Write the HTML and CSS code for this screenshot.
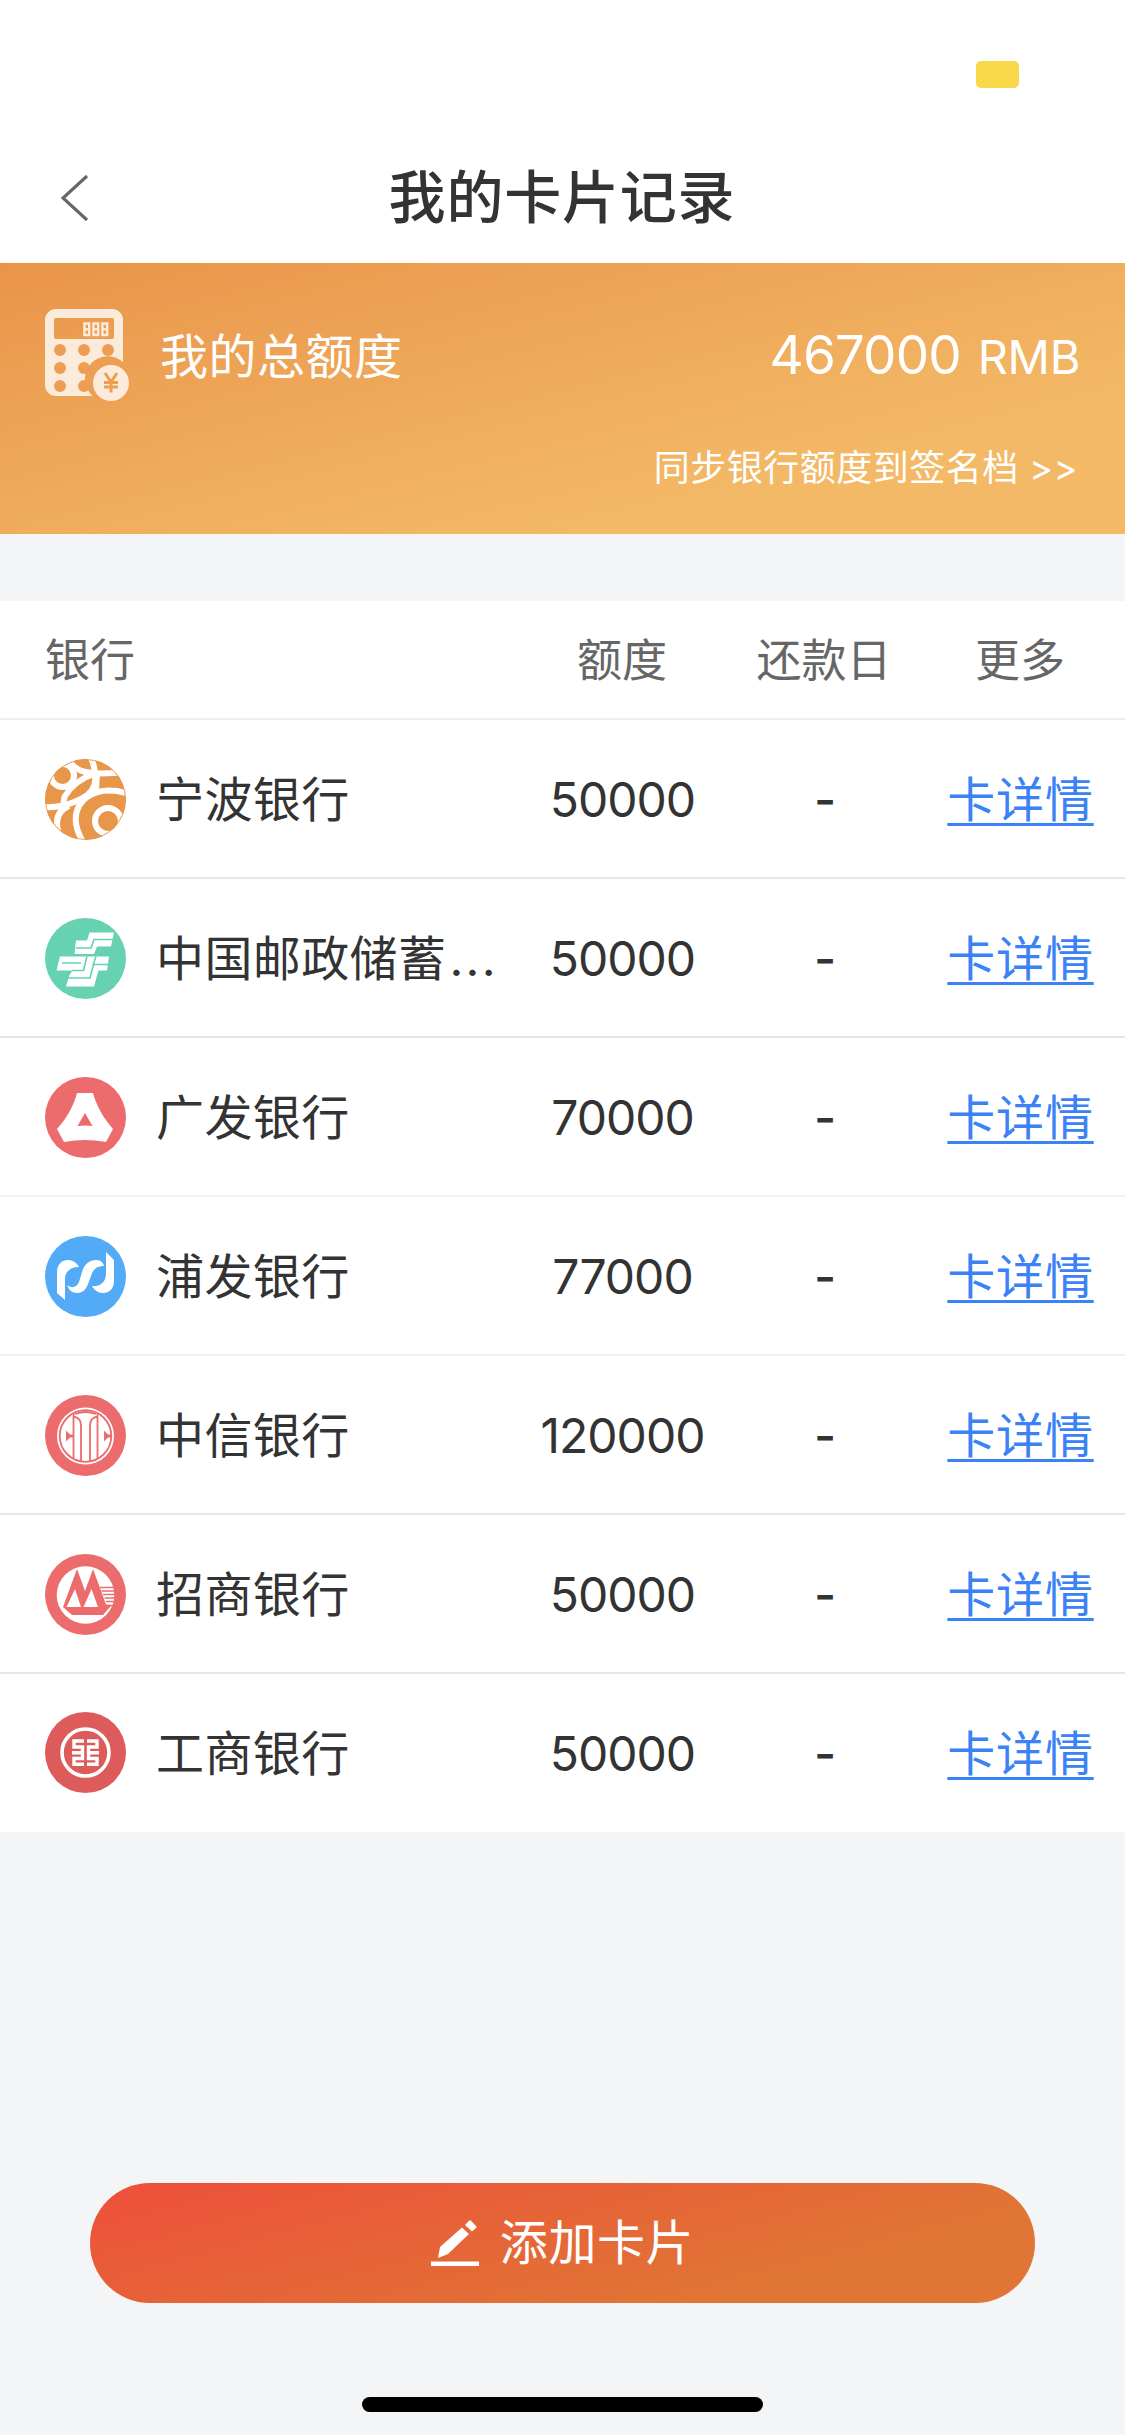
FILE: index.html
```html
<!DOCTYPE html>
<html lang="zh-CN">
<head>
<meta charset="utf-8">
<title>我的卡片记录</title>
<link rel="stylesheet" href="styles.css">
</head>
<body>
<div class="screen">
  <div class="status-bar"><span class="battery"></span></div>
  <header class="nav">
    <svg class="back" viewBox="0 0 28 46"><path d="M26 1 2 23l24 22" fill="none" stroke="#666" stroke-width="3.200"/></svg>
    <h1 class="title">我的卡片记录</h1>
  </header>

  <section class="summary">
    <div class="summary-main">
      <svg class="calculator" viewBox="0 0 84 92">
        <path fill="#fbebdb" fill-rule="evenodd" d="M11 0H67a11 11 0 0 1 11 11V53A21 21 0 0 0 47.500 87H11A11 11 0 0 1 0 76V11A11 11 0 0 1 11 0ZM11 9a2 2 0 0 0-2 2V28a2 2 0 0 0 2 2H67a2 2 0 0 0 2-2V11a2 2 0 0 0-2-2Z"/>
        <g fill="#ed9e52"><circle cx="15" cy="41" r="6"/><circle cx="39" cy="41" r="6"/><circle cx="63" cy="41" r="6"/><circle cx="15" cy="59" r="6"/><circle cx="39" cy="59" r="6"/><circle cx="15" cy="77" r="6"/><circle cx="39" cy="77" r="6"/><circle cx="66" cy="74" r="22"/></g>
        <path fill="none" stroke="#fbebdb" stroke-width="2.400" d="M39.400 14.500h4.800v11.500h-4.800zM39.400 20.200h4.800M48.400 14.500h4.800v11.500h-4.800zM48.400 20.200h4.800M57.400 14.500h4.800v11.500h-4.800zM57.400 20.200h4.800"/>
        <circle cx="66" cy="74" r="18" fill="#fbebdb"/>
        <path d="M60 64l6 9 6-9M66 72v11.500M59 73.500h14M59 78h14" fill="none" stroke="#ed9e52" stroke-width="3"/>
      </svg>
      <span class="summary-label">我的总额度</span>
      <span class="summary-value"><b class="total">467000</b><span class="currency">RMB</span></span>
    </div>
    <a class="sync">同步银行额度到签名档 &gt;&gt;</a>
  </section>

  <main class="table">
    <div class="row head"><span class="bank">银行</span><span>额度</span><span>还款日</span><span>更多</span></div>

    <div class="row">
      <div class="bank">
        <svg class="logo" viewBox="0 0 81 81">
          <clipPath id="disc"><circle cx="40.500" cy="40.500" r="40.500"/></clipPath>
          <g clip-path="url(#disc)">
            <rect width="81" height="81" fill="#e8974a"/>
            <g fill="none" stroke="#fff" stroke-width="6">
              <circle cx="17.500" cy="16.500" r="11.500"/>
              <path d="M24 1C30 13 43 17 81 13M46 -1Q50 8 50 15M50 15C52 27 46 35 36 40C26 45 14 49 0 48M49 15Q30 21 20 37Q17 44 21 50M52 15L51 31"/>
              <path d="M81 34C60 28 42 33 34 47C28 58 31 71 38 83M24 47Q7 54 14 75"/>
              <circle cx="63" cy="62" r="13"/>
            </g>
            <circle cx="40.500" cy="40.500" r="40" fill="none" stroke="#e8974a"/>
          </g>
        </svg>
        <span class="name">宁波银行</span>
      </div>
      <span class="amount">50000</span><span class="due">-</span><a class="detail">卡详情</a>
    </div>

    <div class="row">
      <div class="bank">
        <svg class="logo" viewBox="0 0 81 81">
          <circle cx="40.500" cy="40.500" r="40.500" fill="#66d2b2"/>
          <path fill="#fff" d="M44.500 14.500H69L66 28.500H52L49 36H29.500L31 22.500H42ZM15 38.500H64L62 52.500H53.500L49 68.500H21L24 58 27.500 52.500H11.500Z"/>
          <path fill="none" stroke="#66d2b2" stroke-width="1.600" d="M31 30H46L49 21.500H68M17 45H36M42 38.500 38.500 52.500H27M51 38.500 48 47M23 60H45L48.500 46.500H64"/>
        </svg>
        <span class="name">中国邮政储蓄<span class="dots">...</span></span>
      </div>
      <span class="amount">50000</span><span class="due">-</span><a class="detail">卡详情</a>
    </div>

    <div class="row faint">
      <div class="bank">
        <svg class="logo" viewBox="0 0 81 81">
          <circle cx="40.500" cy="40.500" r="40.500" fill="#ec6b6d"/>
          <path fill="#fff" fill-rule="evenodd" d="M32 16H48C51 28 59 42 68 52L61 65Q40 61 19 65L12 52C22 41 29 28 32 16ZM40 36 32.500 49Q40 48 47.500 49Z"/>
        </svg>
        <span class="name">广发银行</span>
      </div>
      <span class="amount">70000</span><span class="due">-</span><a class="detail">卡详情</a>
    </div>

    <div class="row faint">
      <div class="bank">
        <svg class="logo" viewBox="0 0 81 81">
          <circle cx="40.500" cy="40.500" r="40.500" fill="#53abf8"/>
          <path fill="#fff" d="M12 57V37C12 28 17 24 23 24C28 24 32 27 34 31C25 31 20 36 20 43V64ZM22 49C27 53 32 51 34 46L37 36C39 28 45 24 51 24C55 24 58 26 59 30C51 30 48 34 46 40L43 48C41 54 37 57 32 57C27 57 24 54 22 49ZM47 50C55 51 61 46 61 38V16L69 24V45C69 53 64 57 58 57C53 57 49 54 47 50Z"/>
        </svg>
        <span class="name">浦发银行</span>
      </div>
      <span class="amount">77000</span><span class="due">-</span><a class="detail">卡详情</a>
    </div>

    <div class="row">
      <div class="bank">
        <svg class="logo" viewBox="0 0 81 81">
          <circle cx="40.500" cy="40.500" r="40.500" fill="#ec6b6d"/>
          <circle cx="40.500" cy="41" r="28.500" fill="#fff"/>
          <g fill="none" stroke="#ec6b6d" stroke-width="1.800">
            <circle cx="40.500" cy="41" r="25.800"/>
            <path d="M28.500 18.500V64M52.500 18.500V64M28.500 21.500Q36 23 36 30V66M52.500 21.500Q45 23 45 30V66M30 19Q40.500 15 51 19"/>
          </g>
          <path fill="#ec6b6d" d="M21 35.500 25 39.500H28V42.500H25L21 46.500ZM59 35.500 63 39.500H66V42.500H63L59 46.500Z"/>
        </svg>
        <span class="name">中信银行</span>
      </div>
      <span class="amount">120000</span><span class="due">-</span><a class="detail">卡详情</a>
    </div>

    <div class="row">
      <div class="bank">
        <svg class="logo" viewBox="0 0 81 81">
          <circle cx="40.500" cy="40.500" r="40.500" fill="#ec6b6d"/>
          <circle cx="40.500" cy="41" r="28.800" fill="#fff"/>
          <path fill="#ec6b6d" fill-rule="evenodd" d="M32 15 40 37 48 15 61 50.500 69 51 65 53 58 61H27L18 53ZM30 35 21.500 53H36ZM46.500 35 38.500 53H53Z"/>
          <path fill="none" stroke="#ec6b6d" stroke-width="1.300" d="M55 33.500H70M56.500 37H70M58 40.500H70M59.500 44H70M61 47.500H69"/>
        </svg>
        <span class="name">招商银行</span>
      </div>
      <span class="amount">50000</span><span class="due">-</span><a class="detail">卡详情</a>
    </div>

    <div class="row last">
      <div class="bank">
        <svg class="logo" viewBox="0 0 81 81">
          <circle cx="40.500" cy="40.500" r="40.500" fill="#de5b5c"/>
          <circle cx="40.500" cy="40.500" r="23.500" fill="none" stroke="#fff" stroke-width="3.600"/>
          <path fill="none" stroke="#fff" stroke-width="3.400" d="M39 29H29V35H37.500V40.800H27M37.500 40.800V46.500H29V52.300H39M42 29H52V35H43.500V40.800H54M43.500 40.800V46.500H52V52.300H42"/>
        </svg>
        <span class="name">工商银行</span>
      </div>
      <span class="amount">50000</span><span class="due">-</span><a class="detail">卡详情</a>
    </div>
  </main>

  <footer class="footer">
    <button class="add">
      <svg class="pencil" viewBox="0 0 48 46"><path fill="#fff" d="M0 41.500H48V46H0ZM7 38 9 27 31 7.500 38 14 17 34ZM34 5 38 .8Q39-.2 40 .8L45 6Q46 7 45 8L41 11.500Z"/></svg>
      <span>添加卡片</span>
    </button>
    <div class="home-indicator"></div>
  </footer>
</div>
</body>
</html>
```
FILE: styles.css
```css
* { box-sizing: border-box; }
body { margin: 0; background: #f3f5f7; font-family: Inter, "Noto Sans CJK SC", sans-serif; color: #333; }
.screen { width: 1125px; height: 2435px; display: flex; flex-direction: column; overflow: hidden; }

.status-bar { height: 132px; background: #fff; display: flex; justify-content: flex-end; padding: 61px 106px 0 0; }
.battery { width: 43px; height: 27px; border-radius: 5px; background: #f9d849; }
.nav { height: 131px; background: #fff; display: flex; align-items: center; padding: 0 61px; }
.back { width: 28px; height: 46px; }
.title { flex: 1; margin: 0 29px 0 0; text-align: center; font-size: 57px; line-height: 80px; font-weight: 500; letter-spacing: .8px; }

.summary { height: 271px; padding: 46px 45px 0; color: #fff; background: linear-gradient(166deg, #e99449 0%, #f3b967 75%, #f3b967 100%); display: flex; flex-direction: column; }
.summary-main { display: flex; align-items: flex-start; }
.calculator { width: 84px; height: 92px; }
.summary-label { font-size: 48px; line-height: 60px; letter-spacing: .5px; margin: 18px 0 0 31px; }
.summary-value { margin-left: auto; margin-top: 16px; line-height: 60px; display: flex; align-items: baseline; gap: 17px; }
.total { font-weight: 400; font-size: 53px; letter-spacing: -.9px; }
.currency { font-size: 47px; letter-spacing: -.4px; }
.sync { align-self: flex-end; font-size: 36px; line-height: 50px; letter-spacing: .5px; margin: 42px 2px 0 0; }

.table { margin-top: 67px; background: #fff; }
.row { height: 159px; padding-top: 3px; display: grid; grid-template-columns: 521px 202px 202px 190px; align-items: center; border-bottom: 2px solid #e5e6e7; font-size: 48px; line-height: 64px; text-align: center; }
.row.head { height: 119px; font-size: 45px; color: #666; border-color: #eee; }
.row.faint { border-color: #f0f0f0; }
.row.last { height: 158px; border-color: #fff; }
.bank { display: flex; align-items: center; padding-left: 45px; gap: 30px; text-align: left; }
.logo { width: 81px; height: 81px; flex: none; margin-bottom: 2px; }
.name { white-space: nowrap; letter-spacing: .4px; }
.dots { letter-spacing: 2.300px; margin-left: 3px; }
.amount { letter-spacing: -1px; padding-left: 1px; }
.due { padding-left: 2px; font-weight: 500; }
.detail { color: #3b82f7; text-decoration: underline; text-decoration-thickness: 3px; text-underline-offset: 6px; letter-spacing: .8px; padding-left: 1px; }

.footer { margin-top: auto; padding: 0 90px 23px; display: flex; flex-direction: column; align-items: center; gap: 94px; }
.add { width: 945px; height: 120px; border: 0; border-radius: 60px; display: flex; align-items: center; justify-content: center; gap: 21px; color: #fff; font: 48px/64px Inter, "Noto Sans CJK SC", sans-serif; letter-spacing: .6px; background: linear-gradient(165deg, #ee4f3a 0%, #e07535 75%, #e07535 100%); }
.pencil { width: 48px; height: 46px; }
.home-indicator { width: 401px; height: 15px; border-radius: 8px; background: #000; }
```
